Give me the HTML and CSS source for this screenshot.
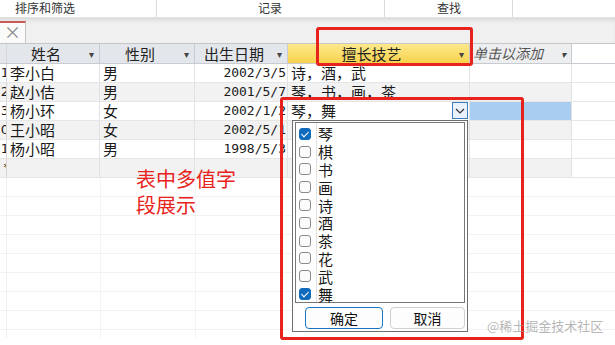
FILE: index.html
```html
<!DOCTYPE html>
<html lang="zh-CN">
<head>
    <meta charset="UTF-8">
    <title>表中多值字段展示</title>
    <link rel="stylesheet" href="styles.css">
</head>
<body>
    <div class="ribbon">
        <div class="group g1">排序和筛选</div>
        <div class="group g2">记录</div>
        <div class="group g3">查找</div>
        <div class="group g4"></div>
    </div>
    <div class="tabs">
        <div class="tab">×</div>
    </div>

    <div class="sheet">
        <div class="row head">
            <div class="sel"></div>
            <div class="hcell">姓名<span class="arr">▾</span></div>
            <div class="hcell">性别<span class="arr">▾</span></div>
            <div class="hcell">出生日期<span class="arr">▾</span></div>
            <div class="hcell active">擅长技艺<span class="arr">▾</span></div>
            <div class="hcell add">单击以添加<span class="arr">▾</span></div>
            <div class="blank"></div>
        </div>
        <div class="row">
            <div class="sel">1</div><div class="cell">李小白</div><div class="cell">男</div>
            <div class="cell num">2002/3/5</div><div class="cell">诗，酒，武</div><div class="cell"></div><div class="blank"></div>
        </div>
        <div class="row alt">
            <div class="sel">2</div><div class="cell">赵小佶</div><div class="cell">男</div>
            <div class="cell num">2001/5/7</div><div class="cell">琴，书，画，茶</div><div class="cell"></div><div class="blank"></div>
        </div>
        <div class="row">
            <div class="sel">3</div><div class="cell">杨小环</div><div class="cell">女</div>
            <div class="cell num">2002/1/2</div>
            <div class="cell editing">琴，舞<span class="dd-btn"><svg width="10" height="6" viewBox="0 0 10 6"><path d="M1 1l4 4 4-4" fill="none" stroke="#333" stroke-width="1.2"/></svg></span></div>
            <div class="cell picked"></div><div class="blank"></div>
        </div>
        <div class="row alt">
            <div class="sel">0</div><div class="cell">王小昭</div><div class="cell">女</div>
            <div class="cell num">2002/5/1</div><div class="cell"></div><div class="cell"></div><div class="blank"></div>
        </div>
        <div class="row">
            <div class="sel">1</div><div class="cell">杨小昭</div><div class="cell">男</div>
            <div class="cell num">1998/5/3</div><div class="cell"></div><div class="cell"></div><div class="blank"></div>
        </div>
        <div class="row alt newrow">
            <div class="sel">*</div><div class="cell"></div><div class="cell"></div>
            <div class="cell"></div><div class="cell"></div><div class="cell"></div><div class="blank"></div>
        </div>
        <div class="empty"></div>
    </div>

    <div class="dropdown">
        <div class="list">
            <div class="item"><span class="cb on"></span>琴</div>
            <div class="item"><span class="cb"></span>棋</div>
            <div class="item"><span class="cb"></span>书</div>
            <div class="item"><span class="cb"></span>画</div>
            <div class="item"><span class="cb"></span>诗</div>
            <div class="item"><span class="cb"></span>酒</div>
            <div class="item"><span class="cb"></span>茶</div>
            <div class="item"><span class="cb"></span>花</div>
            <div class="item"><span class="cb"></span>武</div>
            <div class="item"><span class="cb on"></span>舞</div>
        </div>
        <div class="buttons">
            <button class="ok">确定</button>
            <button>取消</button>
        </div>
    </div>

    <div class="mark mark-head"></div>
    <div class="mark mark-list"></div>
    <div class="note">表中多值字<br>段展示</div>
    <div class="watermark">@稀土掘金技术社区</div>
</body>
</html>
```

FILE: styles.css
```css
body {
    margin: 0;
    width: 615px;
    height: 345px;
    overflow: hidden;
    position: relative;
    background: #fff;
    font-family: "Noto Sans CJK SC", "Liberation Sans", sans-serif;
    color: #1a1a1a;
}
.ribbon {
    display: grid;
    grid-template-columns: 157px 228px 128px 1fr;
    height: 17px;
    background: #fff;
    font-size: 12px;
    line-height: 15px;
}
.group {
    border-right: 1px solid #dcdcdc;
    color: #333;
}
.g1 { padding-left: 15px; }
.g2 { padding-left: 101px; }
.g3 { padding-left: 52px; }
.g4 { border-right: none; }
.tabs {
    height: 25px;
    background: #f0f0f0;
    border-top: 1px solid #e2e2e2;
    box-shadow: inset 0 4px 4px -2px #d8d8d8;
    display: flex;
    border-bottom: 1px solid #c6c6c6;
}
.tab {
    width: 25px;
    margin-top: 3px;
    background: #fafafa;
    border-top: 2px solid #c75a5a;
    border-right: 1px solid #c6c6c6;
    color: #888;
    font-size: 17px;
    line-height: 18px;
    text-align: center;
}
.sheet {
    display: flex;
    flex-direction: column;
}
.row {
    display: grid;
    grid-template-columns: 7px 93px 95px 93px 182px 102px 1fr;
    height: 19px;
    font-size: 15px;
    line-height: 18px;
    border-bottom: 1px solid #e6e6e6;
    box-sizing: border-box;
}
.row.alt { background: #f2f2f2; }
.row.head {
    height: 20px;
    line-height: 19px;
    background: #e3e6ea;
    border-bottom: 1px solid #c8ccd2;
}
.sel {
    border-right: 1px solid #d6d6d6;
    text-align: right;
    overflow: hidden;
    white-space: nowrap;
    direction: rtl;
    text-indent: -3px;
    font-family: "DejaVu Sans", sans-serif;
    font-size: 13px;
}
.head .sel { background: #e3e6ea; }
.newrow .sel { font-size: 11px; }
.hcell {
    position: relative;
    text-align: center;
    border-right: 1px solid #c8ccd2;
    padding-right: 14px;
    color: #222;
}
.hcell .arr {
    position: absolute;
    right: 5px;
    top: 0;
    font-size: 10px;
    color: #444;
}
.hcell.active {
    background: linear-gradient(#fde98c, #f8d24c);
}
.hcell.add {
    background: #edeef0;
    font-style: italic;
    color: #555;
    text-align: left;
    padding-left: 3px;
    font-size: 14px;
}
.blank { background: #fff; }
.cell {
    border-right: 1px solid #e2e2e2;
    padding-left: 3px;
    white-space: nowrap;
    position: relative;
}
.cell.num {
    text-align: right;
    padding-left: 0;
    padding-right: 1px;
    font-family: "DejaVu Sans Mono", monospace;
    font-size: 13px;
}
.cell.editing {
    background: #fff;
}
.dd-btn {
    position: absolute;
    right: 1px;
    top: 0;
    width: 16px;
    height: 17px;
    box-sizing: border-box;
    border: 1px solid #3b7ec0;
    background: #e9f2fb;
    display: flex;
    align-items: center;
    justify-content: center;
}
.cell.picked { background: #a9cdf0; }
.empty {
    height: 160px;
    background:
        repeating-linear-gradient(to bottom, transparent 0 18px, #f2f2f2 18px 19px),
        linear-gradient(to right, transparent 6px, #f0f0f0 6px 7px, transparent 7px 100px, #f3f3f3 100px 101px, transparent 101px 195px, #f3f3f3 195px 196px, transparent 196px);
}
.dropdown {
    position: absolute;
    left: 292px;
    top: 120px;
    width: 176px;
    height: 212px;
    box-sizing: border-box;
    border: 1px solid #6e6e6e;
    background: #fff;
    padding: 1px 2px;
}
.list {
    border: 1px solid #767676;
    height: 181px;
    padding-top: 2px;
    background: linear-gradient(to right, transparent 20px, #e0e0e0 20px 21px, transparent 21px);
    box-sizing: border-box;
}
.item {
    display: flex;
    align-items: center;
    height: 17.8px;
    font-size: 15px;
    line-height: 17px;
    gap: 7px;
    padding-left: 3px;
}
.cb {
    width: 12px;
    height: 12px;
    border: 1px solid #8a8a8a;
    border-radius: 3px;
    background: #fbfbfb;
    box-sizing: border-box;
    position: relative;
}
.cb.on {
    background: #0f6cbd;
    border-color: #0f6cbd;
}
.cb.on::after {
    content: "";
    position: absolute;
    left: 3px;
    top: 1px;
    width: 3px;
    height: 6px;
    border: solid #fff;
    border-width: 0 1px 1px 0;
    transform: rotate(45deg);
}
.buttons {
    display: flex;
    gap: 7px;
    padding: 4px 0 0 10px;
}
.buttons button {
    width: 75px;
    height: 22px;
    font-family: "Noto Sans CJK SC", sans-serif;
    font-size: 14px;
    line-height: 18px;
    padding: 0;
    background: #fdfdfd;
    border: 1px solid #d0d0d0;
    border-radius: 4px;
    color: #111;
}
.buttons button.ok {
    width: 78px;
    border-color: #1a74c4;
}
.mark {
    position: absolute;
    border: 3px solid #e8231d;
    border-radius: 3px;
}
.mark-head {
    left: 316px;
    top: 27px;
    width: 151px;
    height: 33px;
}
.mark-list {
    left: 280px;
    top: 97px;
    width: 238px;
    height: 237px;
}
.note {
    position: absolute;
    left: 136px;
    top: 166px;
    font-size: 20px;
    line-height: 26px;
    color: #e8231d;
}
.watermark {
    position: absolute;
    left: 487px;
    top: 316px;
    font-size: 13px;
    color: rgba(150, 150, 150, 0.7);
}
```
